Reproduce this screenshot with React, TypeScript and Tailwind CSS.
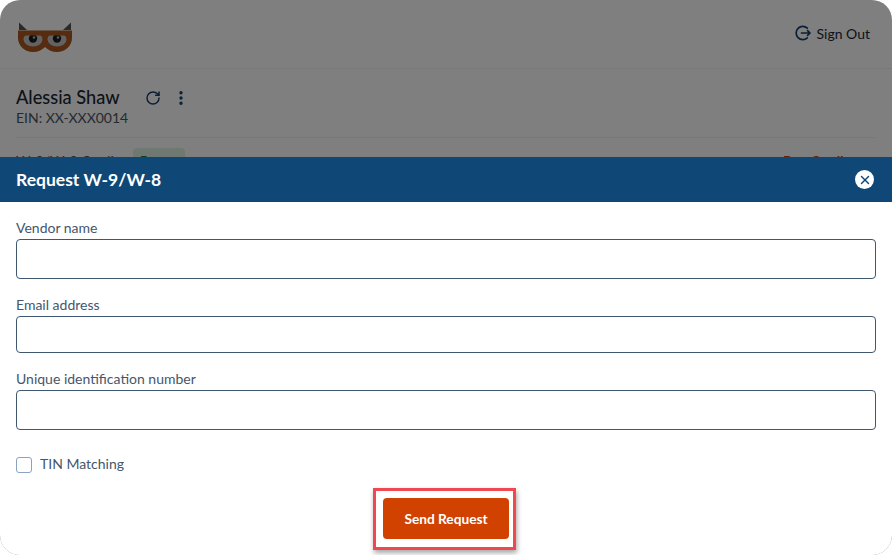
import { EllipsisVertical, RotateCw, X } from "lucide-react";

function Owl() {
  return (
    <svg width="56" height="32" viewBox="0 0 56 32" className="mt-[6px]">
      <path d="M2 9 L2 1.5 L10 9 Z" fill="#555" />
      <path d="M54 9 L54 1.5 L46 9 Z" fill="#555" />
      <path d="M1 9.5 H55 V17 C55 25 48 31 40 31 C35 31 31 29 28 26 C25 29 21 31 16 31 C8 31 1 25 1 17 Z" fill="#ac561e" />
      <ellipse cx="16" cy="18.5" rx="9.5" ry="7" fill="#c4c4c4" />
      <ellipse cx="40" cy="18.5" rx="9.5" ry="7" fill="#c4c4c4" />
      <circle cx="16" cy="17.5" r="4.2" fill="#1c1c1c" />
      <circle cx="40" cy="17.5" r="4.2" fill="#1c1c1c" />
      <circle cx="17" cy="16.5" r="1.3" fill="#b5b5b5" />
      <circle cx="41" cy="16.5" r="1.3" fill="#b5b5b5" />
      <rect x="5" y="10" width="46" height="4.5" fill="#ac561e" />
    </svg>
  );
}

function SignOutIcon() {
  return (
    <svg width="16" height="16" viewBox="0 0 16 16" fill="none" stroke="#123f6d" strokeWidth="1.7" strokeLinecap="round" strokeLinejoin="round">
      <path d="M12.3 3.2 A6.6 6.6 0 1 0 12.3 12.8" />
      <path d="M6.5 8 H15 M12.6 5.7 L15 8 L12.6 10.3" />
    </svg>
  );
}

function Field({ label, inputClass, className }: { label: string; inputClass: string; className: string }) {
  return (
    <div className={className}>
      <label className="block text-[14px] leading-[18px] text-[#44566c]">{label}</label>
      <input className={`mt-[2px] block w-full rounded-[4px] border border-[#3f5870] bg-white ${inputClass}`} />
    </div>
  );
}

export default function App() {
  return (
    <div className="relative h-[555px] w-[892px] overflow-hidden bg-white font-['Lato',sans-serif]">
      <header className="flex h-[69px] items-center justify-between border-b border-[#f0f0f0] pl-[17px] pr-[22px]">
        <Owl />
        <div className="mb-[2px] flex items-center gap-[6px] text-[14px] text-[#1b2733]">
          <SignOutIcon />
          Sign Out
        </div>
      </header>
      <section className="px-4 pt-[17px]">
        <div className="flex h-[24px] items-center">
          <span className="mb-[3px] text-[18.2px] font-medium leading-[24px] text-[#1b2733]">Alessia Shaw</span>
          <RotateCw size={16} strokeWidth={2.2} className="ml-[25px] text-[#123f6d]" />
          <EllipsisVertical size={18} strokeWidth={2.5} className="ml-[11px] text-[#123f6d]" />
        </div>
        <div className="-mt-[1px] text-[14px] leading-[18px] text-[#4a5561]">EIN: XX-XXX0014</div>
        <div className="mt-[10px] flex items-center justify-between border-t border-[#f0f0f0] pt-[10px] pr-[21px]">
          <div className="flex items-center gap-[8px] text-[14px] text-[#4a5561]">
            W-9/W-8 Credits
            <span className="flex h-[24px] w-[52px] items-center rounded-[4px] bg-[#dff3e4] pl-[7px] text-[12px] font-bold text-[#15803d]">
              Free
            </span>
          </div>
          <span className="text-[14px] font-bold text-[#d14200]">Buy Credits</span>
        </div>
      </section>

      <div className="absolute inset-0 rounded-[20px] bg-black/50" />

      <div className="absolute inset-x-0 bottom-0 top-[157px] flex flex-col rounded-b-[20px] bg-white">
        <div className="flex h-[45px] shrink-0 items-center justify-between bg-[#0f4777] pl-4 pr-[18px]">
          <h2 className="pt-[1px] text-[17.5px] font-bold text-white">Request W-9/W-8</h2>
          <span className="flex h-[19px] w-[19px] items-center justify-center rounded-full bg-white">
            <X size={14} strokeWidth={2.4} className="text-[#0f4777]" />
          </span>
        </div>
        <div className="px-4">
          <Field label="Vendor name" inputClass="h-[40px]" className="mt-[17px]" />
          <Field label="Email address" inputClass="h-[37px]" className="mt-[17px]" />
          <Field label="Unique identification number" inputClass="h-[40px]" className="mt-[17px]" />
          <label className="mt-[27px] flex items-center gap-[8px] text-[14px] leading-[16px] text-[#44566c]">
            <span className="h-[16px] w-[16px] rounded-[3px] border border-[#8aa3c0] bg-white" />
            <span className="-translate-y-px">TIN Matching</span>
          </label>
        </div>
        <div className="mt-[15px] flex justify-center">
          <div className="mr-[3px] border-[3px] border-[#ef4850] pb-[8px] pl-[7px] pr-[4px] pt-[7px] shadow-[1px_3px_5px_rgba(0,0,0,0.35)]">
            <button className="h-[41px] w-[126px] rounded-[4px] bg-[#d14200] pt-[2px] text-[13.7px] font-bold text-white">
              Send Request
            </button>
          </div>
        </div>
      </div>
    </div>
  );
}
